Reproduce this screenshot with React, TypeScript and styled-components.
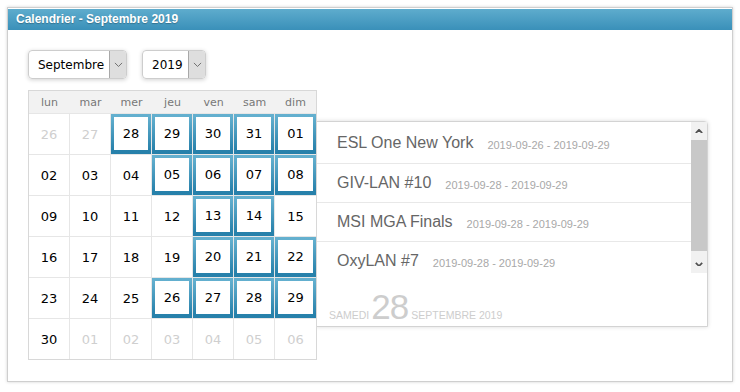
import React from 'react';
import styled, { createGlobalStyle } from 'styled-components';

const GlobalStyle = createGlobalStyle`
  body {
    margin: 0;
    background: #fff;
    font-family: "Liberation Sans", Arial, sans-serif;
  }
`;

const Page = styled.div`
  padding: 7px;
`;

const Panel = styled.div`
  width: 726px;
  box-sizing: border-box;
  border: 1px solid #cfcfcf;
  padding-top: 1px;
  box-shadow: 0 0 3px rgba(0, 0, 0, 0.18);
  background: #fff;
`;

const Header = styled.div`
  height: 21px;
  line-height: 21px;
  padding-left: 8px;
  background: linear-gradient(to bottom, #5eaccd, #3a90b9);
  color: #fff;
  font-weight: bold;
  font-size: 12px;
  text-shadow: 0 1px 1px rgba(0, 0, 0, 0.25);
`;

const Body = styled.div`
  padding: 20px 20px 21px 20px;
`;

const SelectRow = styled.div`
  display: flex;
  gap: 15px;
  margin-bottom: 11px;
`;

const SelectBox = styled.div<{ width: number }>`
  width: ${({ width }) => width}px;
  height: 29px;
  box-sizing: border-box;
  border: 1px solid #cdcdcd;
  border-radius: 4px;
  box-shadow: 0 1px 4px rgba(0, 0, 0, 0.18);
  display: flex;
  overflow: hidden;
  font-family: "DejaVu Sans", Verdana, sans-serif;
  font-size: 12px;
  color: #000;
`;

const SelectValue = styled.div`
  flex: 1;
  display: flex;
  align-items: center;
  padding-left: 9px;
`;

const SelectButton = styled.div`
  width: 16px;
  border-left: 1px solid #a8a8a8;
  background: #dedede;
  display: flex;
  align-items: center;
  justify-content: center;
`;

const CalendarRow = styled.div`
  display: flex;
  align-items: flex-start;
`;

const Calendar = styled.div`
  position: relative;
  z-index: 1;
  border: 1px solid #d8d8d8;
  background: #fff;
  font-family: "DejaVu Sans", Verdana, sans-serif;
`;

const WeekHead = styled.div`
  display: grid;
  grid-template-columns: repeat(7, 41px);
  height: 22px;
  background: #f2f2f2;
`;

const WeekName = styled.div`
  display: flex;
  align-items: center;
  justify-content: center;
  font-size: 11px;
  color: #777;
`;

const DayGrid = styled.div`
  display: grid;
  grid-template-columns: repeat(7, 41px);
  grid-auto-rows: 41px;
`;

const DayCell = styled.div<{ faded?: boolean }>`
  box-sizing: border-box;
  border-right: 1px solid #e6e6e6;
  border-top: 1px solid #e6e6e6;
  display: flex;
  align-items: stretch;
  justify-content: stretch;
  font-size: 13px;
  color: ${({ faded }) => (faded ? '#cfcfcf' : '#000')};
  &:nth-child(7n) {
    border-right: none;
  }
`;

const DayInner = styled.div<{ marked?: boolean }>`
  flex: 1;
  display: flex;
  align-items: center;
  justify-content: center;
  box-sizing: border-box;
  ${({ marked }) =>
    marked
      ? `
    border-style: solid;
    border-width: 3px 3px 4px 3px;
    border-image: linear-gradient(to bottom, #64b0cf, #2680aa) 1;
  `
      : ''}
`;

const EventsPanel = styled.div`
  margin-top: 31px;
  margin-left: -1px;
  width: 392px;
  box-sizing: border-box;
  border: 1px solid #d3d3d3;
  border-radius: 0 4px 0 0;
  box-shadow: 0 0 4px rgba(0, 0, 0, 0.15);
  background: #fff;
`;

const ListArea = styled.div`
  display: flex;
  height: 151px;
`;

const EventList = styled.div`
  flex: 1;
  overflow: hidden;
`;

const EventRow = styled.div<{ first?: boolean }>`
  height: ${({ first }) => (first ? 40 : 38)}px;
  border-bottom: 1px solid #e8e8e8;
  display: flex;
  align-items: center;
  padding-left: 20px;
  padding-top: ${({ first }) => (first ? 1 : 0)}px;
  box-sizing: content-box;
`;

const EventName = styled.span`
  font-size: 16px;
  color: #666;
  margin-right: 14px;
`;

const EventDates = styled.span`
  font-size: 11px;
  color: #a8a8a8;
  padding-top: 3px;
`;

const Scrollbar = styled.div`
  width: 16px;
  display: flex;
  flex-direction: column;
  background: #f1f1f1;
`;

const ScrollArrow = styled.div<{ h: number }>`
  height: ${({ h }) => h}px;
  display: flex;
  align-items: center;
  justify-content: center;
`;

const ScrollThumb = styled.div`
  height: 111px;
  background: #c8c8c8;
`;

const ScrollSpace = styled.div`
  flex: 1;
`;

const DateFooter = styled.div`
  height: 53px;
  display: flex;
  align-items: baseline;
  padding: 0 0 0 12px;
  color: #cdcdcd;
  line-height: 1;
  box-sizing: border-box;
  padding-top: 16px;
`;

const DateSmall = styled.span`
  font-size: 10.5px;
  text-transform: uppercase;
`;

const DateBig = styled.span`
  font-size: 35px;
  margin: 0 3px 0 2px;
  letter-spacing: -1px;
`;

const Chevron = ({ up, color, w, bold }: { up?: boolean; color: string; w: number; bold?: boolean }) => (
  <svg width={w} height={w * 0.6} viewBox="0 0 10 6">
    <polyline
      points={up ? '1,5 5,1 9,5' : '1,1 5,5 9,1'}
      fill="none"
      stroke={color}
      strokeWidth={bold ? 2.2 : 1}
    />
  </svg>
);

const weekNames = ['lun', 'mar', 'mer', 'jeu', 'ven', 'sam', 'dim'];

type Day = { n: string; faded?: boolean; marked?: boolean };

const marked = new Set([
  '0-28', '0-29', '0-30', '0-31', '0-01',
  '1-05', '1-06', '1-07', '1-08',
  '2-13', '2-14',
  '3-20', '3-21', '3-22',
  '4-26', '4-27', '4-28', '4-29',
]);

const weeks: string[][] = [
  ['26', '27', '28', '29', '30', '31', '01'],
  ['02', '03', '04', '05', '06', '07', '08'],
  ['09', '10', '11', '12', '13', '14', '15'],
  ['16', '17', '18', '19', '20', '21', '22'],
  ['23', '24', '25', '26', '27', '28', '29'],
  ['30', '01', '02', '03', '04', '05', '06'],
];

const days: Day[] = weeks.flatMap((w, r) =>
  w.map((n, c) => ({
    n,
    faded: (r === 0 && c < 2) || (r === 5 && c > 0),
    marked: marked.has(`${r}-${n}`),
  }))
);

const events = [
  { name: 'ESL One New York', dates: '2019-09-26 - 2019-09-29' },
  { name: 'GIV-LAN #10', dates: '2019-09-28 - 2019-09-29' },
  { name: 'MSI MGA Finals', dates: '2019-09-28 - 2019-09-29' },
  { name: 'OxyLAN #7', dates: '2019-09-28 - 2019-09-29' },
];

export default function App() {
  return (
    <Page>
      <GlobalStyle />
      <Panel>
        <Header>Calendrier - Septembre 2019</Header>
        <Body>
          <SelectRow>
            <SelectBox width={99}>
              <SelectValue>Septembre</SelectValue>
              <SelectButton>
                <Chevron color="#666" w={9} />
              </SelectButton>
            </SelectBox>
            <SelectBox width={64}>
              <SelectValue>2019</SelectValue>
              <SelectButton>
                <Chevron color="#666" w={9} />
              </SelectButton>
            </SelectBox>
          </SelectRow>
          <CalendarRow>
            <Calendar>
              <WeekHead>
                {weekNames.map((d) => (
                  <WeekName key={d}>{d}</WeekName>
                ))}
              </WeekHead>
              <DayGrid>
                {days.map((d, i) => (
                  <DayCell key={i} faded={d.faded}>
                    <DayInner marked={d.marked}>{d.n}</DayInner>
                  </DayCell>
                ))}
              </DayGrid>
            </Calendar>
            <EventsPanel>
              <ListArea>
                <EventList>
                  {events.map((e, i) => (
                    <EventRow key={e.name} first={i === 0}>
                      <EventName>{e.name}</EventName>
                      <EventDates>{e.dates}</EventDates>
                    </EventRow>
                  ))}
                </EventList>
                <Scrollbar>
                  <ScrollArrow h={18}>
                    <Chevron up bold color="#505050" w={8} />
                  </ScrollArrow>
                  <ScrollThumb />
                  <ScrollSpace />
                  <ScrollArrow h={18}>
                    <Chevron bold color="#505050" w={8} />
                  </ScrollArrow>
                </Scrollbar>
              </ListArea>
              <DateFooter>
                <DateSmall>Samedi</DateSmall>
                <DateBig>28</DateBig>
                <DateSmall>Septembre 2019</DateSmall>
              </DateFooter>
            </EventsPanel>
          </CalendarRow>
        </Body>
      </Panel>
    </Page>
  );
}
